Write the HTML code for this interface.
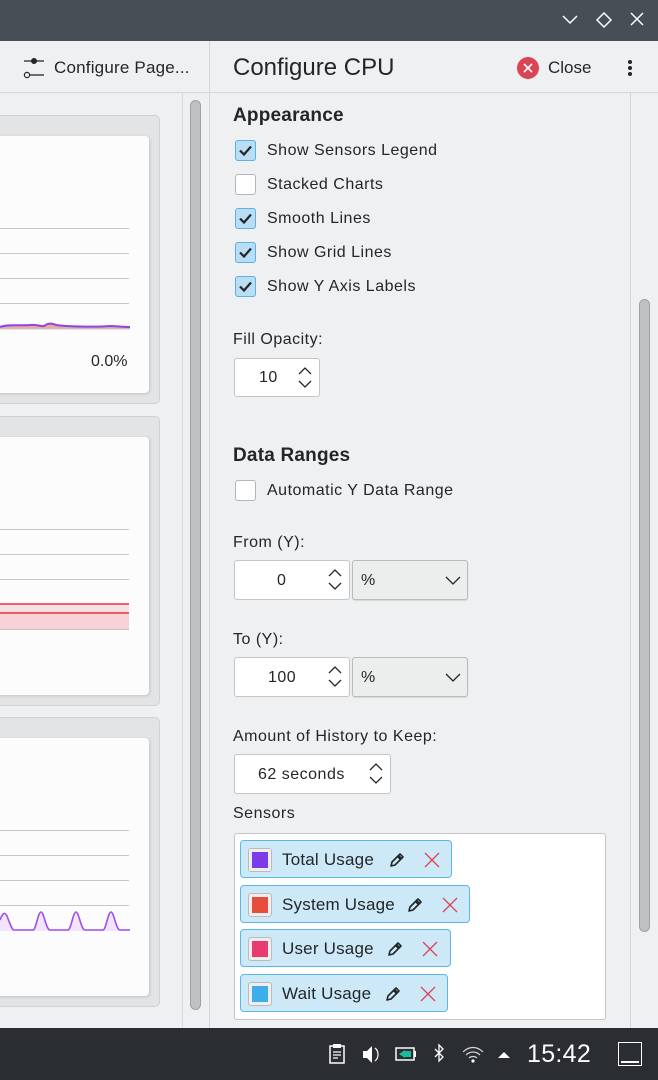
<!DOCTYPE html>
<html><head><meta charset="utf-8"><style>
*{margin:0;padding:0;box-sizing:border-box}
body{width:658px;height:1080px;overflow:hidden;background:#eff0f1;font-family:"Liberation Sans","Noto Sans CJK JP",sans-serif;color:#232629;position:relative}
.a{position:absolute}
.t{font-size:16px;white-space:nowrap;line-height:22px;letter-spacing:.5px}
.cb{position:absolute;left:235px;width:21px;height:21px;border-radius:3px;border:1px solid #b3b6b9;background:#fff}
.cb.on{background:#b9def3;border-color:#5cb1e6}
.gl{position:absolute;left:0;width:129px;height:1px;background:#c4c6c8}
.spin{position:absolute;background:#fff;border:1px solid #c3c5c7;border-radius:3px}
.combo{position:absolute;background:#eceded;border:1px solid #b9bbbd;border-radius:3px;box-shadow:0 1px 1px rgba(0,0,0,.1)}
.chip{position:absolute;left:240px;height:38px;background:#cde9f8;border:1px solid #5cb6e8;border-radius:4px}
.sw{position:absolute;left:7px;top:7px;width:24px;height:24px;border:1px solid #b9bbbd;border-radius:3px;background:#eee;padding:3px}
.sw div{width:100%;height:100%}
</style></head><body>
<div class="a" style="left:0;top:0;width:658px;height:41px;background:#474e56"></div>
<svg class="a" style="left:555px;top:8px" width="100" height="24" viewBox="0 0 100 24">
<path d="M8 8 L15 15 L22 8" stroke="#fff" stroke-width="1.5" fill="none"/>
<path d="M49 5 L56 12 L49 19 L42 12 Z" stroke="#fff" stroke-width="1.5" fill="none"/>
<path d="M76 5 L88 17 M88 5 L76 17" stroke="#fff" stroke-width="1.5" fill="none"/>
</svg>
<div class="a" style="left:0;top:92px;width:658px;height:1px;background:#d4d6d8"></div>
<div class="a" style="left:209px;top:41px;width:1px;height:987px;background:#d4d6d8"></div>
<svg class="a" style="left:22px;top:55px" width="24" height="26"><path d="M2 6H22" stroke="#232629" stroke-width="1.3"/><circle cx="12" cy="6" r="3" fill="#232629"/><path d="M8 20H22" stroke="#232629" stroke-width="1.3"/><circle cx="5" cy="20" r="2.6" fill="none" stroke="#232629" stroke-width="1.2"/></svg>
<div class="a t" style="left:54px;top:57px;font-size:17px;letter-spacing:.2px">Configure Page...</div>
<div class="a t" style="left:233px;top:54px;font-size:24px;letter-spacing:0;line-height:28px">Configure CPU</div>
<svg class="a" style="left:516px;top:56px" width="24" height="24"><circle cx="12" cy="12" r="11" fill="#da4453"/><path d="M8 8L16 16M16 8L8 16" stroke="#fff" stroke-width="1.6"/></svg>
<div class="a t" style="left:548px;top:57px;font-size:17px;letter-spacing:0">Close</div>
<div class="a" style="left:628px;top:60px;width:4px;height:4px;border-radius:2px;background:#232629"></div>
<div class="a" style="left:628px;top:66px;width:4px;height:4px;border-radius:2px;background:#232629"></div>
<div class="a" style="left:628px;top:72px;width:4px;height:4px;border-radius:2px;background:#232629"></div>

<div class="a" style="left:182px;top:93px;width:1px;height:935px;background:#d8dadc"></div>
<div class="a" style="left:190px;top:100px;width:11px;height:910px;border-radius:6px;background:#bfc1c3;border:1px solid #9fa2a4"></div>

<div class="a" style="left:-10px;top:115px;width:170px;height:289px;background:#e2e4e6;border:1px solid #d0d2d4;border-radius:5px"></div>
<div class="a" style="left:-10px;top:136px;width:159px;height:257px;background:#fcfcfc;border-radius:4px;box-shadow:1px 1px 3px rgba(0,0,0,.15)"></div>
<div class="gl" style="top:228px"></div><div class="gl" style="top:253px"></div><div class="gl" style="top:278px"></div><div class="gl" style="top:303px"></div>
<svg class="a" style="left:0;top:315px" width="130" height="15"><path d="M0 12 C8 9 20 11 30 10 C38 9 40 12 44 11 C48 8 52 8 56 10 C70 12 100 12 110 11 C116 11 120 12 130 12 L130 14 L0 14Z" fill="#e5735d" opacity=".6"/><path d="M0 12 C8 9 20 11 30 10 C38 9 40 12 44 11 C48 8 52 8 56 10 C70 12 100 12 110 11 C116 11 120 12 130 12" stroke="#8a47e6" stroke-width="2" fill="none"/><path d="M0 14H130" stroke="#c4c6c8"/></svg>
<div class="a t" style="left:91px;top:351px;letter-spacing:0">0.0%</div>

<div class="a" style="left:-10px;top:416px;width:170px;height:290px;background:#e2e4e6;border:1px solid #d0d2d4;border-radius:5px"></div>
<div class="a" style="left:-10px;top:437px;width:159px;height:258px;background:#fcfcfc;border-radius:4px;box-shadow:1px 1px 3px rgba(0,0,0,.15)"></div>
<div class="gl" style="top:529px"></div><div class="gl" style="top:554px"></div><div class="gl" style="top:579px"></div>
<div class="a" style="left:0;top:604px;width:129px;height:25px;background:#fbe0e3"></div>
<div class="a" style="left:0;top:613px;width:129px;height:16px;background:#f8d2d6"></div>
<div class="a" style="left:0;top:603px;width:129px;height:2px;background:#ec5f78"></div>
<div class="a" style="left:0;top:612px;width:129px;height:2px;background:#e8605a"></div>
<div class="gl" style="top:629px"></div>

<div class="a" style="left:-10px;top:717px;width:170px;height:290px;background:#e2e4e6;border:1px solid #d0d2d4;border-radius:5px"></div>
<div class="a" style="left:-10px;top:738px;width:159px;height:258px;background:#fcfcfc;border-radius:4px;box-shadow:1px 1px 3px rgba(0,0,0,.15)"></div>
<div class="gl" style="top:830px"></div><div class="gl" style="top:855px"></div><div class="gl" style="top:880px"></div><div class="gl" style="top:905px"></div>
<svg class="a" style="left:0;top:908px" width="130" height="24"><path d="M0 12 C3 4 5 4 7 8 C10 16 12 22 14 22 L33 22 C36 22 38 4 41 4 C44 4 46 22 50 22 L68 22 C71 22 73 4 76 4 C79 4 81 22 85 22 L103 22 C106 22 108 4 111 4 C114 4 116 22 120 22 L130 22 L130 23 L0 23Z" fill="#f1e4fb"/><path d="M0 12 C3 4 5 4 7 8 C10 16 12 22 14 22 L33 22 C36 22 38 4 41 4 C44 4 46 22 50 22 L68 22 C71 22 73 4 76 4 C79 4 81 22 85 22 L103 22 C106 22 108 4 111 4 C114 4 116 22 120 22 L130 22" stroke="#a050e8" stroke-width="1.6" fill="none"/></svg>

<div class="a" style="left:630px;top:93px;width:1px;height:935px;background:#d4d6d8"></div>
<div class="a" style="left:639px;top:299px;width:11px;height:633px;border-radius:6px;background:#bfc1c3;border:1px solid #9fa2a4"></div>

<div class="a t" style="left:233px;top:105px;font-size:19px;font-weight:bold;letter-spacing:.2px">Appearance</div>
<svg width="0" height="0" style="position:absolute"><defs><path id="ck" d="M5 10.5L9 14.5L16 6.5" stroke="#232629" stroke-width="2.2" fill="none"/></defs></svg>
<div class="cb on" style="top:140px"><svg width="21" height="21" style="margin:-1px"><use href="#ck"/></svg></div><div class="a t" style="left:267px;top:140px">Show Sensors Legend</div>
<div class="cb" style="top:174px"></div><div class="a t" style="left:267px;top:174px">Stacked Charts</div>
<div class="cb on" style="top:208px"><svg width="21" height="21" style="margin:-1px"><use href="#ck"/></svg></div><div class="a t" style="left:267px;top:208px">Smooth Lines</div>
<div class="cb on" style="top:242px"><svg width="21" height="21" style="margin:-1px"><use href="#ck"/></svg></div><div class="a t" style="left:267px;top:242px">Show Grid Lines</div>
<div class="cb on" style="top:276px"><svg width="21" height="21" style="margin:-1px"><use href="#ck"/></svg></div><div class="a t" style="left:267px;top:276px">Show Y Axis Labels</div>

<div class="a t" style="left:233px;top:329px">Fill Opacity:</div>
<div class="spin" style="left:234px;top:358px;width:86px;height:39px"><div class="a t" style="left:24px;top:8px">10</div></div>
<svg width="0" height="0" style="position:absolute"><defs><g id="ar"><path d="M1 7L7 1L13 7M1 14L7 20L13 14" stroke="#232629" stroke-width="1.3" fill="none"/></g></defs></svg>
<svg class="a" style="left:298px;top:367px" width="14" height="22"><use href="#ar"/></svg>

<div class="a t" style="left:233px;top:445px;font-size:19px;font-weight:bold;letter-spacing:.2px">Data Ranges</div>
<div class="cb" style="top:480px"></div><div class="a t" style="left:267px;top:480px">Automatic Y Data Range</div>

<div class="a t" style="left:233px;top:532px">From (Y):</div>
<div class="spin" style="left:234px;top:560px;width:116px;height:40px"><div class="a t" style="left:42px;top:9px">0</div></div>
<svg class="a" style="left:328px;top:569px" width="14" height="22"><use href="#ar"/></svg>
<div class="combo" style="left:352px;top:560px;width:116px;height:40px"><div class="a t" style="left:8px;top:9px">%</div><svg class="a" style="left:92px;top:14px" width="16" height="10"><path d="M1 2L8 9L15 2" stroke="#232629" stroke-width="1.3" fill="none"/></svg></div>

<div class="a t" style="left:233px;top:629px">To (Y):</div>
<div class="spin" style="left:234px;top:657px;width:116px;height:40px"><div class="a t" style="left:33px;top:9px">100</div></div>
<svg class="a" style="left:328px;top:666px" width="14" height="22"><use href="#ar"/></svg>
<div class="combo" style="left:352px;top:657px;width:116px;height:40px"><div class="a t" style="left:8px;top:9px">%</div><svg class="a" style="left:92px;top:14px" width="16" height="10"><path d="M1 2L8 9L15 2" stroke="#232629" stroke-width="1.3" fill="none"/></svg></div>

<div class="a t" style="left:233px;top:726px">Amount of History to Keep:</div>
<div class="spin" style="left:234px;top:754px;width:157px;height:40px"><div class="a t" style="left:23px;top:9px">62 seconds</div></div>
<svg class="a" style="left:369px;top:763px" width="14" height="22"><use href="#ar"/></svg>

<div class="a t" style="left:233px;top:803px">Sensors</div>
<div class="a" style="left:234px;top:833px;width:372px;height:187px;background:#fff;border:1px solid #c3c5c7;border-radius:3px"></div>
<svg width="0" height="0" style="position:absolute"><defs>
<g id="pen"><path d="M3 15L4 11L12 3L15 6L7 14Z" stroke="#232629" stroke-width="1.6" fill="none" stroke-linejoin="round"/><path d="M10 5L13 8" stroke="#232629" stroke-width="3"/></g>
<g id="x"><path d="M2 2L16 16M16 2L2 16" stroke="#da4453" stroke-width="1.3"/></g></defs></svg>
<div class="chip" style="top:840px;width:212px"><div class="sw"><div style="background:#7c3be8"></div></div><div class="a t" style="left:41px;top:8px;font-size:17px;letter-spacing:.2px">Total Usage</div><svg class="a" style="left:147px;top:10px" width="18" height="18"><use href="#pen"/></svg><svg class="a" style="left:182px;top:10px" width="18" height="18"><use href="#x"/></svg></div>
<div class="chip" style="top:885px;width:230px"><div class="sw"><div style="background:#e74c3c"></div></div><div class="a t" style="left:41px;top:8px;font-size:17px;letter-spacing:.2px">System Usage</div><svg class="a" style="left:165px;top:10px" width="18" height="18"><use href="#pen"/></svg><svg class="a" style="left:200px;top:10px" width="18" height="18"><use href="#x"/></svg></div>
<div class="chip" style="top:929px;width:211px"><div class="sw"><div style="background:#e93a72"></div></div><div class="a t" style="left:41px;top:8px;font-size:17px;letter-spacing:.2px">User Usage</div><svg class="a" style="left:145px;top:10px" width="18" height="18"><use href="#pen"/></svg><svg class="a" style="left:180px;top:10px" width="18" height="18"><use href="#x"/></svg></div>
<div class="chip" style="top:974px;width:208px"><div class="sw"><div style="background:#3daee9"></div></div><div class="a t" style="left:41px;top:8px;font-size:17px;letter-spacing:.2px">Wait Usage</div><svg class="a" style="left:143px;top:10px" width="18" height="18"><use href="#pen"/></svg><svg class="a" style="left:178px;top:10px" width="18" height="18"><use href="#x"/></svg></div>

<div class="a" style="left:0;top:1028px;width:658px;height:52px;background:#2a2e32"></div>
<svg class="a" style="left:325px;top:1040px" width="220" height="30">
<rect x="5" y="6" width="14" height="17" fill="none" stroke="#fcfcfc" stroke-width="1.5"/><rect x="8" y="4" width="8" height="4" fill="#fcfcfc"/><path d="M8 12H16M8 15H16M8 18H13" stroke="#fcfcfc" stroke-width="1.2"/>
<path d="M38 11H42L47 6V23L42 18H38Z" fill="#fcfcfc"/><path d="M50 8C54 11 54 18 50 21" stroke="#fcfcfc" stroke-width="1.2" fill="none"/>
<rect x="71" y="8" width="18" height="12" fill="none" stroke="#fcfcfc" stroke-width="1.5"/><rect x="89" y="11" width="2" height="6" fill="#fcfcfc"/><path d="M74 14L80 10V18Z" fill="#1abc9c"/><rect x="80" y="11" width="6" height="6" fill="#1abc9c"/>
<path d="M110 9L118 17L114 21V5L118 9L110 17" stroke="#fcfcfc" stroke-width="1.3" fill="none"/>
<path d="M138 12C144 6 152 6 158 12M141 15C145 11 151 11 155 15M144 18C146 16 150 16 152 18" stroke="#fcfcfc" stroke-width="1.2" fill="none" opacity=".8"/><circle cx="148" cy="21" r="1.6" fill="#fcfcfc"/>
<path d="M173 18L179 12L185 18Z" fill="#fcfcfc"/>
</svg>
<div class="a t" style="left:527px;top:1040px;font-size:25px;color:#fcfcfc;letter-spacing:.3px;line-height:28px">15:42</div>
<div class="a" style="left:618px;top:1042px;width:24px;height:24px;border:1.5px solid #fcfcfc"></div>
<div class="a" style="left:621px;top:1061px;width:18px;height:1.5px;background:#fcfcfc"></div>
</body></html>
